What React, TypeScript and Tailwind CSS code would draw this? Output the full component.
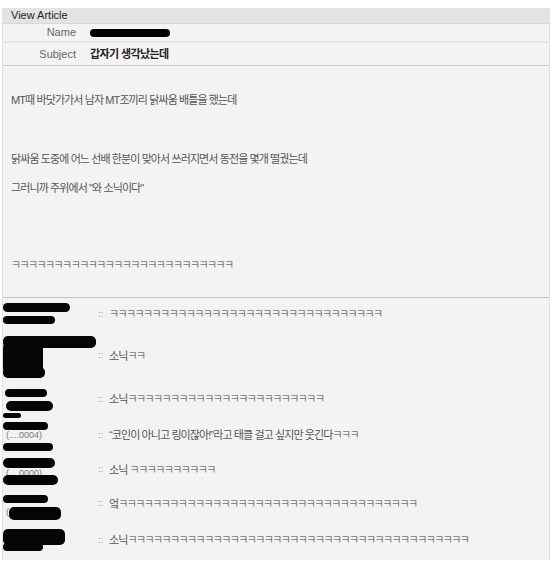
import React from "react";

type Mark = [number, number, number, number];

interface Comment {
  h: number;
  text: string;
  marks: Mark[];
  note?: string;
  noteY?: number;
}

const k = (n: number) => "ㅋ".repeat(n);

const comments: Comment[] = [
  { h: 33, text: k(32), marks: [[0, 5, 67, 9], [0, 18, 52, 8]] },
  {
    h: 50,
    text: "소닉ㅋㅋ",
    marks: [[0, 5, 93, 12], [0, 12, 40, 30], [0, 36, 42, 11]],
    note: ")",
    noteY: 36,
  },
  { h: 37, text: "소닉" + k(23), marks: [[2, 8, 42, 8], [3, 20, 47, 10], [0, 32, 18, 5]] },
  {
    h: 35,
    text: "\u201C코인이 아니고 링이잖아!\u201D라고 태클 걸고 싶지만 웃긴다ㅋㅋㅋ",
    marks: [[0, 4, 45, 8], [0, 25, 50, 8]],
    note: "(....0004)",
    noteY: 11,
  },
  {
    h: 34,
    text: "소닉 " + k(10),
    marks: [[0, 5, 52, 10], [0, 22, 55, 10]],
    note: "(....0000)",
    noteY: 14,
  },
  {
    h: 34,
    text: "엌" + k(35),
    marks: [[0, 8, 45, 8], [6, 20, 52, 13]],
    note: "(",
    noteY: 19,
  },
  { h: 39, text: "소닉" + k(40), marks: [[0, 8, 62, 16], [0, 22, 40, 8]] },
];

function Redaction({ marks, h }: { marks: Mark[]; h: number }) {
  return (
    <svg width="95" height={h} className="absolute left-0 top-0">
      {marks.map(([x, y, w, mh], i) => (
        <rect key={i} x={x} y={y} width={w} height={mh} rx={Math.min(mh / 2, 5)} fill="#050505" />
      ))}
    </svg>
  );
}

function Laughs({ text }: { text: string }) {
  return (
    <>
      {text.split(/(ㅋ+)/).map((part, j) =>
        part.startsWith("ㅋ") ? (
          <span key={j} className="tracking-[-1.6px] text-[#777]">
            {part}
          </span>
        ) : (
          <span key={j}>{part}</span>
        )
      )}
    </>
  );
}

export default function App() {
  return (
    <div
      className="bg-white w-[556px] h-[577px] pt-2 pl-[2px] text-[11px] text-[#666]"
      style={{ fontFamily: '"Liberation Sans", "Noto Sans CJK KR", sans-serif' }}
    >
      <div className="w-[548px] bg-[#f3f3f3] border-l border-r border-[#e2e2e2]">
        <div className="h-4 bg-[#e3e3e3] flex items-center pl-2 text-[#222] border-b border-[#d8d8d8]">
          View Article
        </div>
        <div className="h-[19px] flex items-center border-b-2 border-[#e6e6e6]">
          <div className="w-[73px] text-right text-[#666]">Name</div>
          <div className="ml-[14px] w-[80px] h-[8px] rounded-full bg-black" />
        </div>
        <div className="h-[23px] flex items-center border-b border-[#cfcfcf]">
          <div className="w-[73px] text-right text-[#666]">Subject</div>
          <div className="ml-[14px] font-bold text-[#222] tracking-[-0.6px]">갑자기 생각났는데</div>
        </div>
        <div className="h-[232px] pl-2 border-b border-[#c4c4c4] text-[#555] tracking-[-0.9px]">
          <p className="pt-[26px]">MT때 바닷가가서 남자 MT조끼리 닭싸움 배틀을 했는데</p>
          <p className="mt-[42px]">닭싸움 도중에 어느 선배 한분이 맞아서 쓰러지면서 동전을 몇개 떨궜는데</p>
          <p className="mt-[13px]">그러니까 주위에서 "와 소닉이다"</p>
          <p className="mt-[60px]">
            <Laughs text={k(26)} />
          </p>
        </div>
        <div>
          {comments.map((c, i) => (
            <div key={i} className="flex items-center" style={{ height: c.h }}>
              <div className="relative w-[95px] h-full shrink-0">
                {c.note && (
                  <span
                    className="absolute left-[3px] text-[9px] text-[#777]"
                    style={{ top: c.noteY }}
                  >
                    {c.note}
                  </span>
                )}
                <Redaction marks={c.marks} h={c.h} />
              </div>
              <span className="text-[#999] text-[9px] w-[11px]">::</span>
              <span className="text-[#555] tracking-[-0.9px]">
                <Laughs text={c.text} />
              </span>
            </div>
          ))}
        </div>
      </div>
    </div>
  );
}
